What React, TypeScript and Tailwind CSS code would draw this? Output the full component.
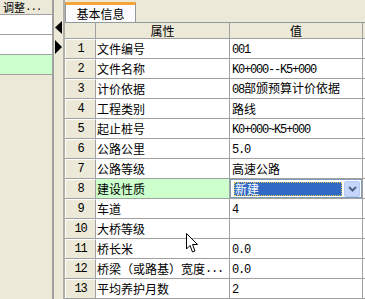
import React from "react";

const rows: [string, string][] = [
  ["文件编号", "001"],
  ["文件名称", "K0+000--K5+000"],
  ["计价依据", "08部颁预算计价依据"],
  ["工程类别", "路线"],
  ["起止桩号", "K0+000~K5+000"],
  ["公路公里", "5.0"],
  ["公路等级", "高速公路"],
  ["建设性质", "新建"],
  ["车道", "4"],
  ["大桥等级", ""],
  ["桥长米", "0.0"],
  ["桥梁（或路基）宽度...", "0.0"],
  ["平均养护月数", "2"],
];

function Txt({ s }: { s: string }) {
  const parts = s.match(/[\x20-\x7e]+|[^\x20-\x7e]+/g) || [];
  return (
    <>
      {parts.map((p, i) =>
        /^[\x20-\x7e]+$/.test(p) ? (
          <span key={i} className="font-['Liberation_Mono',monospace] tracking-[-1.2px]">
            {p}
          </span>
        ) : (
          <span key={i}>{p}</span>
        )
      )}
    </>
  );
}

export default function App() {
  return (
    <div className="w-[365px] h-[299px] overflow-hidden bg-[#ece9d8] flex text-[12px] leading-[14px] text-black font-['Noto_Sans_CJK_SC','Noto_Sans',sans-serif] relative">
      {/* left panel */}
      <div className="w-[54px] shrink-0 border-r-2 border-[#a0a0a0] flex flex-col">
        <div className="h-[15px] border-b border-[#a0a0a0] pl-[3px] flex items-end whitespace-nowrap text-[11px] leading-[13px]">
          <Txt s="调整..." />
        </div>
        <div className="h-[20px] bg-white border-b border-[#a0a0a0]" />
        <div className="h-[20px] bg-white border-b border-[#a0a0a0]" />
        <div className="h-[20px] bg-[#ccffcc] border-b border-[#a0a0a0]" />
      </div>
      {/* splitter */}
      <div className="w-[9px] shrink-0 flex flex-col items-center pt-[21px]">
        <svg width="7" height="13" viewBox="0 0 7 13">
          <polygon points="7,0 0,6.5 7,13" fill="#000" />
        </svg>
        <svg width="7" height="14" viewBox="0 0 7 14" className="mt-[6px]">
          <polygon points="0,0 7,7 0,14" fill="#000" />
        </svg>
      </div>
      {/* right panel */}
      <div className="flex-1 border-l-2 border-[#b0b0a8] flex flex-col">
        <div className="h-[22px] shrink-0 flex items-end">
          <div className="w-[71px] h-[20px] bg-[#fcfcfe] border-x border-[#919b9c] border-t-[3px] border-t-[#f6a53a] flex items-center justify-center">
            基本信息
          </div>
        </div>
        <div className="flex-1 bg-white border-t border-[#919b9c] flex flex-col">
          {/* header */}
          <div className="h-[16px] shrink-0 flex bg-[#ece9d8] border-b border-[#a0a0a0]">
            <div className="w-[31px] border-r border-[#a0a0a0]" />
            <div className="w-[134px] border-r border-[#a0a0a0] flex items-center justify-center">属性</div>
            <div className="w-[133px] border-r border-[#a0a0a0] flex items-center justify-center">值</div>
          </div>
          {rows.map(([k, v], i) => (
            <div key={i} className="h-[20px] shrink-0 flex border-b border-[#a0a0a0]">
              <div className="w-[31px] bg-[#ece9d8] border-t border-l border-white border-r border-r-[#a0a0a0] flex items-center justify-center font-['Liberation_Mono',monospace] tracking-[-1.2px]">
                {i + 1}
              </div>
              <div
                className={`w-[134px] border-r border-[#a0a0a0] pl-[1px] flex items-center whitespace-nowrap overflow-hidden ${
                  i === 7 ? "bg-[#ccffcc]" : "bg-white"
                }`}
              >
                <Txt s={k} />
              </div>
              <div className="w-[133px] border-r border-[#a0a0a0] flex items-center whitespace-nowrap overflow-hidden">
                {i === 7 ? (
                  <div className="w-full h-full border border-[#7f9db9] bg-white flex items-center pl-[3px] pr-[1px]">
                    <div className="flex-1 h-[14px] bg-[#316ac5] text-white border border-dotted border-[#e8c840] flex items-center">
                      新建
                    </div>
                    <div className="w-[16px] h-[16px] ml-[2px] rounded-[2px] bg-[#c6d6fb] border border-[#b5c8f4] flex items-center justify-center">
                      <svg width="9" height="6" viewBox="0 0 9 6">
                        <polyline points="1,1 4.5,4.5 8,1" fill="none" stroke="#4d6185" strokeWidth="2" />
                      </svg>
                    </div>
                  </div>
                ) : (
                  <span className="pl-[2px]">
                    <Txt s={v} />
                  </span>
                )}
              </div>
            </div>
          ))}
        </div>
      </div>
      {/* mouse cursor */}
      <svg
        className="absolute left-[186px] top-[233px]"
        width="13"
        height="21"
        viewBox="0 0 13 21"
      >
        <polygon
          points="0.5,0.5 0.5,16 4,12.5 6.5,19 9,18 6.5,11.5 11.5,11.5"
          fill="#fff"
          stroke="#000"
          strokeWidth="1"
        />
      </svg>
    </div>
  );
}
